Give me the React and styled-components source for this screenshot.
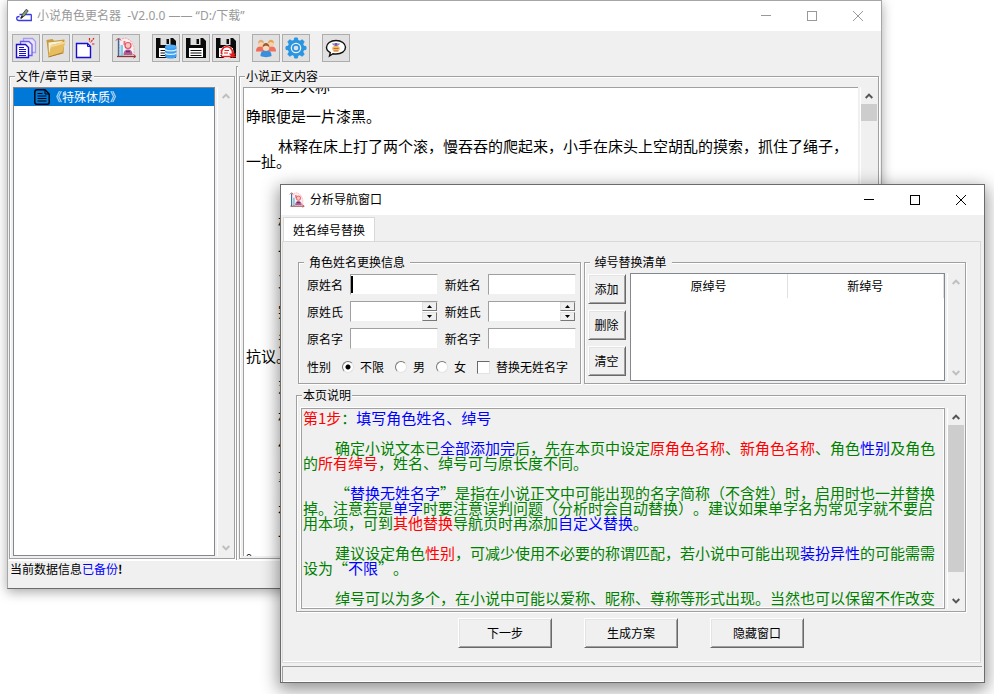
import React from "react";
import styled, { createGlobalStyle, css } from "styled-components";

const FACE = "#f0f0f0";
const SHADE = "#a0a0a0";

const GlobalStyle = createGlobalStyle`
  *, *::before, *::after { box-sizing: border-box; }
  body {
    margin: 0;
    background: #fff;
    color: #000;
    font: 12px/16px "Noto Sans CJK SC", sans-serif;
    text-spacing-trim: space-all;
  }
  button, input { font: inherit; color: inherit; margin: 0; padding: 0; border-radius: 0; }
  ul, p { margin: 0; padding: 0; }
`;

/* ---------- windows ---------- */

const Desktop = styled.main`
  position: relative;
  min-height: 100vh;
  overflow: hidden;
`;

const Window = styled.section`
  position: absolute;
  inset: ${(p) => p.$inset};
  display: flex;
  flex-direction: column;
  background: ${FACE};
  border: 1px solid ${(p) => (p.$active ? "#6b6b6b" : "#a6a6a6")};
  border-bottom-color: #6b6b6b;
  box-shadow: ${(p) =>
    p.$active
      ? "0 5px 16px 2px rgba(0, 0, 0, 0.42)"
      : "0 3px 11px rgba(0, 0, 0, 0.34)"};
`;

const TitleBar = styled.header`
  flex: none;
  display: flex;
  align-items: center;
  height: 30px;
  padding-left: 8px;
  background: #fff;
  color: ${(p) => (p.$active ? "#000" : "#999")};
`;

const TitleText = styled.h1`
  flex: 1;
  margin: 0 0 0 5px;
  font-family: "Noto Sans", "Noto Sans CJK SC", sans-serif;
  font-size: 12px;
  font-weight: 400;
  line-height: 16px;
  white-space: pre;
`;

const CaptionButton = styled.button`
  width: 46px;
  height: 30px;
  display: grid;
  place-items: center;
  border: 0;
  background: transparent;
`;

function Captions() {
  return (
    <>
      <CaptionButton type="button" aria-label="最小化">
        <svg width="10" height="10" stroke="currentColor" shapeRendering="crispEdges"><path d="M0 4.5H10" /></svg>
      </CaptionButton>
      <CaptionButton type="button" aria-label="最大化">
        <svg width="10" height="10" stroke="currentColor" fill="none" shapeRendering="crispEdges"><path d="M.5 .5h9v9h-9z" /></svg>
      </CaptionButton>
      <CaptionButton type="button" aria-label="关闭">
        <svg width="12" height="12" stroke="currentColor" fill="none"><path d="M1 1L11 11M11 1L1 11" /></svg>
      </CaptionButton>
    </>
  );
}

/* ---------- scroll bar ---------- */

const ScrollTrack = styled.div`
  flex: none;
  width: 17px;
  display: flex;
  flex-direction: column;
  border-left: 1px solid #fff;
  background: ${FACE};
`;

const ScrollButton = styled.button`
  flex: none;
  height: 17px;
  display: grid;
  place-items: center;
  border: 0;
  background: transparent;
  color: ${(p) => (p.disabled ? "#bfbfbf" : "#555")};
`;

const ThumbLane = styled.div`
  flex: 1;
  min-height: 0;
`;

const Thumb = styled.div`
  height: ${(p) => p.$size};
  background: #cdcdcd;
`;

function ScrollBar({ size }) {
  return (
    <ScrollTrack>
      <ScrollButton type="button" aria-label="向上" disabled={!size}>
        <svg width="8" height="8" fill="none" stroke="currentColor" strokeWidth="2"><path d="M.7 6L4 2.6L7.3 6" /></svg>
      </ScrollButton>
      <ThumbLane>{size && <Thumb $size={size} />}</ThumbLane>
      <ScrollButton type="button" aria-label="向下" disabled={!size}>
        <svg width="8" height="8" fill="none" stroke="currentColor" strokeWidth="2"><path d="M.7 2L4 5.4L7.3 2" /></svg>
      </ScrollButton>
    </ScrollTrack>
  );
}

/* ---------- groups ---------- */

const Group = styled.fieldset`
  min-width: 0;
  min-height: 0;
  margin: 0;
  padding: 0;
  border: 1px solid ${SHADE};
  box-shadow: 1px 1px 0 #fff, inset 1px 1px 0 #fff;
`;

const GroupTitle = styled.legend`
  margin-left: 5px;
  padding: 0 ${(p) => (p.$wide ? "5px" : "1px")};
  height: 16px;
  line-height: 15px;
  background: ${FACE};
`;

const PaneRow = styled.div`
  display: flex;
  gap: 2px;
  height: 100%;
  padding: ${(p) => p.$pad || "3px 0 2px 3px"};
`;

/* ---------- tool bar ---------- */

const ToolBar = styled.div`
  flex: none;
  display: flex;
  gap: 12px;
  padding: 3px 4px 4px;
`;

const ToolGroup = styled.div`
  display: flex;
  gap: 2px;
`;

const ToolButton = styled.button`
  width: 28px;
  height: 28px;
  display: grid;
  place-items: center;
  border: 1px solid #adadad;
  background: #e1e1e1;
`;

const PenLogo = () => (
  <svg width="16" height="16" viewBox="0 0 16 16" fill="none">
    <path d="M3.500 6.500H14.500Q15.300 6.500 15.300 7.300V12.500H3Q.7 12.500 .7 10.300 .7 8.500 3.500 8.500" fill="#fff" stroke="#3a3ae6" strokeWidth="1.300" />
    <path d="M5 10L6.200 6.500L10.200 1.300l2 1.500L8.200 8.200z" fill="#7fa578" stroke="#444" strokeWidth=".9" />
    <path d="M4.600 10.500l2.200-2.200" stroke="#222" strokeWidth="1.400" />
  </svg>
);

const PagesIcon = () => (
  <svg width="22" height="22" viewBox="0 0 22 22" fill="none">
    <path d="M8.500 1.500h9l3 3v11h-12z" fill="#e8e6f5" stroke="#a79bf5" strokeWidth="1.300" />
    <path d="M5.500 4.500h8.500l3 3v11h-11.500z" fill="#eeedf8" stroke="#6a5cf0" strokeWidth="1.300" />
    <path d="M1.500 7.500h9l3 3v10h-12z" fill="#fff" stroke="#1a0fd0" strokeWidth="1.400" />
    <path d="M4 10.500h5M4 12.500h7M4 14.500h7M4 16.500h7M4 18.500h7" stroke="#1a0fd0" strokeWidth="1" />
  </svg>
);

const FolderIcon = () => (
  <svg width="22" height="22" viewBox="0 0 22 22">
    <path d="M1.500 3l6-1 1.500 1.700L19.500 2.500l-1 14L3.500 20z" fill="#c99a3a" />
    <path d="M3.500 5.500L17.500 4l-1 7L4 16z" fill="#f5f0df" />
    <path d="M6 8l14.500-3.500L17 16 3.500 20z" fill="#e6bd62" />
    <path d="M6 8l14.500-3.500-.7 2L5.600 10.500z" fill="#f5d88f" />
    <path d="M3.500 20L17 16" stroke="#a97b28" />
  </svg>
);

const NewPageIcon = () => (
  <svg width="22" height="22" viewBox="0 0 22 22" fill="none">
    <path d="M1.500 6.500h11l3 3v11h-14z" fill="#fff" stroke="#1a0fd0" strokeWidth="1.400" />
    <path d="M12.500 6.500v3h3" stroke="#1a0fd0" />
    <path d="M14.500 1v3.500M19 1l-3.500 4.500M17 7h3" stroke="#e31c1c" strokeWidth="1.200" strokeDasharray="2 .6" />
  </svg>
);

const ChartIcon = ({ size = 22 }) => (
  <svg width={size} height={size} viewBox="0 0 22 22" fill="none">
    <path d="M4 2.500l7-1.500 5 3 3 6v8H5z" fill="#fdeef0" stroke="#f0a9b0" strokeDasharray="2 1" />
    <path d="M5.500 8v11h2.500V8z" fill="#7ed0ea" />
    <path d="M8.500 4v4h2V4z" fill="#f0708a" />
    <circle cx="13" cy="8.500" r="3" fill="#f6c9b4" stroke="#e0506c" strokeWidth="1.200" />
    <path d="M8.500 18c0-4 2-5.500 4.500-5.500s4.500 1.500 4.500 5.500z" fill="#b25c90" />
    <path d="M11 14.500h4" stroke="#5b2f86" strokeWidth="1.500" />
    <path d="M3.500 2v17.500" stroke="#2f6f9f" strokeWidth="1.400" />
    <path d="M1 3.500L3.500 1 6 3.500" stroke="#b83a3a" />
    <path d="M2 19.500h18" stroke="#8a3434" strokeWidth="1.300" />
    <path d="M18.500 17.500l2.500 2-2.500 1.500" stroke="#b83a3a" />
  </svg>
);

const Floppy = ({ children }) => (
  <svg width="22" height="22" viewBox="0 0 22 22">
    <path d="M1 1h17l3 3v17H1z" fill="#0a0a0a" />
    <path d="M5.500 1h10v7h-10z" fill="#dedede" />
    <path d="M11.500 2h2.500v5h-2.500z" fill="#0a0a0a" />
    <path d="M4 11h14v9H4z" fill="#fff" />
    <path d="M5.500 13.500h11M5.500 16h11M5.500 18.500h11" stroke="#0a0a0a" />
    {children}
  </svg>
);

const SaveDataIcon = () => (
  <Floppy>
    <path d="M10 9.500h11.500V19.500H10z" fill="#3d9df0" />
    <ellipse cx="15.750" cy="9.500" rx="5.750" ry="2" fill="#4facf7" />
    <ellipse cx="15.750" cy="19.500" rx="5.750" ry="2" fill="#3d9df0" />
    <path d="M10 12.500c2 1.800 9.500 1.800 11.500 0M10 16c2 1.800 9.500 1.800 11.500 0" fill="none" stroke="#d9f0ff" strokeWidth="1.200" />
  </Floppy>
);

const SaveAsIcon = () => (
  <Floppy>
    <circle cx="12" cy="15" r="6.500" fill="#fff" />
    <path d="M7 17.500A5.500 5.500 0 1 1 17.500 15.500v2" fill="none" stroke="#ee1c1c" strokeWidth="1.600" />
    <path d="M14 16.500h7l-3.500 4.500z" fill="#ee1c1c" />
    <path d="M6 19.500h15" stroke="#ee1c1c" strokeWidth="1.400" />
    <path d="M9.500 13.500h4.500M9 16h4" stroke="#ee1c1c" />
  </Floppy>
);

const PeopleIcon = () => (
  <svg width="22" height="22" viewBox="0 0 22 22">
    <path d="M1 14.500c0-4 2-5 4.500-5s4 1 4 5z" fill="#ef6a5c" />
    <path d="M12.500 14.500c0-4 1.500-5 4-5s4.500 1 4.500 5z" fill="#f2705f" />
    <circle cx="6" cy="6.500" r="3" fill="#f8cfa6" />
    <circle cx="16" cy="6.500" r="3" fill="#f8cfa6" />
    <path d="M3 6.500C3 1.500 9 1.500 9 6.500 7 4.500 5 4.500 3 6.500z" fill="#e0a878" />
    <path d="M13 6.500c0-5 6-5 6 0-2-2-4-2-6 0z" fill="#dfa552" />
    <path d="M5.500 19c0-5 2.500-5.500 5.500-5.500s5.500.5 5.500 5.500c-3 1.500-8 1.500-11 0z" fill="#3a8fdc" />
    <circle cx="11" cy="10.500" r="3.300" fill="#fad9b8" />
    <path d="M7.500 10.500c0-6 7-6 7 0-2-2.500-5-2.500-7 0z" fill="#9a5a2e" />
  </svg>
);

const TEETH = [0, 45, 90, 135, 180, 225, 270, 315];
const GearIcon = () => (
  <svg width="22" height="22" viewBox="0 0 22 22" fill="none">
    {TEETH.map((a) => (
      <path key={a} d="M9 4l.6-3h2.800l.6 3z" fill="#2b95e0" stroke="#2b95e0" transform={`rotate(${a} 11 11)`} />
    ))}
    <circle cx="11" cy="11" r="6.800" fill="#e6f2fb" stroke="#2b95e0" strokeWidth="3" />
    <circle cx="11" cy="11" r="3.200" fill="#e1e1e1" stroke="#2b95e0" strokeWidth="1.700" />
  </svg>
);

const BubbleIcon = () => (
  <svg width="22" height="22" viewBox="0 0 22 22">
    <path d="M11 3.500c5.500 0 9.500 3 9.500 6.800S16.500 17 11 17c-1 0-2-.1-3-.3L4.500 19l.8-3.300C3 14.500 1.500 12.500 1.500 10.300 1.500 6.500 5.500 3.500 11 3.500z" fill="#fff" stroke="#111" strokeWidth="1.400" />
    <path d="M7.500 6.500l2 1.800M14.500 6.500l-2 1.800" stroke="#8c7cc0" strokeWidth="1.200" />
    <path d="M9.500 6h3v3h-3z" fill="#6b5ab8" />
    <ellipse cx="11" cy="11.500" rx="3.800" ry="2.800" fill="#f3b95c" />
    <path d="M8.500 11.500h5" stroke="#b9703a" />
    <path d="M8.500 14h5" stroke="#d4602a" />
  </svg>
);

const DocIcon = () => (
  <svg width="16" height="16" viewBox="0 0 16 16" fill="none" stroke="#000">
    <path d="M3 .7h8L15.200 5v8.500c0 1.100-.6 1.800-1.800 1.800H3c-1.400 0-2.200-.8-2.200-2.100v-10.300c0-1.400.8-2.200 2.200-2.200z" strokeWidth="1.400" />
    <path d="M11 1v4h4" />
    <path d="M3.500 4.500h5M3.500 7h9M3.500 9.500h9M3.500 12h9" />
  </svg>
);

const TOOLS = [
  [["打开目录", PagesIcon], ["打开文件夹", FolderIcon], ["新建", NewPageIcon]],
  [["分析", ChartIcon]],
  [["备份", SaveDataIcon], ["保存", Floppy], ["还原", SaveAsIcon]],
  [["角色", PeopleIcon], ["设置", GearIcon]],
  [["关于", BubbleIcon]],
];

/* ---------- main window ---------- */

const Panes = styled.div`
  flex: 1;
  min-height: 0;
  display: flex;
  padding: 0 2px 0 1px;
  border-bottom: 1px solid #fff;
`;

const Pane = styled.div`
  display: grid;
  grid-template-rows: minmax(0, 1fr);
  min-width: 0;
  padding: 2px 0 1px;
  flex: ${(p) => p.$flex};
`;

const Sash = styled.div`
  flex: none;
  width: 2px;
  margin: 0 1px;
  border-left: 1px solid ${SHADE};
  border-top: 1px solid ${SHADE};
  background: #fff;
`;

const Tree = styled.ul`
  flex: 1;
  border: 1px solid #828790;
  background: #fff;
  list-style: none;
`;

const TreeItem = styled.li`
  display: flex;
  align-items: center;
  height: 18px;
  padding-left: 20px;
  color: #fff;
  background: #0078d7;
`;

const Novel = styled.div`
  flex: 1;
  overflow: hidden;
  padding: 0 0 0 2px;
  border: solid ${SHADE};
  border-width: 1px 0 0 1px;
  background: #fff;
  font-size: 15px;
  line-height: 15px;
`;

const NovelText = styled.div`
  margin-top: -10px;
`;

const Line = styled.p`
  min-height: 15px;
  white-space: ${(p) => (p.$keep ? "nowrap" : "normal")};
  text-indent: ${(p) => p.$indent || "0"};
`;

const NOVEL = [
  ["第三人称", "24px"], [""],
  ["睁眼便是一片漆黑。"], [""],
  ["林释在床上打了两个滚，慢吞吞的爬起来，小手在床头上空胡乱的摸索，抓住了绳子，一扯。", "32px", true],
  [""], ["“你说，这里黑", "32px"], [""],
  ["杯", "32px"], [""], ["一", "32px"], [""], ["又", "32px"], [""], ["突", "32px"], [""],
  ["没", "32px"], ["抗议。"], [""], ["对", "32px"], [""], ["林", "32px"], [""],
  ["但", "32px"], [""], ["拿", "32px"], [""], ["是", "32px"], [""], ["一", "32px"], ["。"],
];

const Status = styled.footer`
  flex: none;
  height: 27px;
  padding: 0 2px;
`;

const Blue = styled.span`color: #00f;`;
const Red = styled.span`color: #f00;`;

/* ---------- dialog ---------- */

const Tabs = styled.div`
  flex: none;
  display: flex;
  padding: 2px 2px 0;
`;

const Tab = styled.button`
  height: 25px;
  margin-bottom: -1px;
  padding: 0 9px;
  border: 1px solid #d9d9d9;
  border-bottom: 0;
  background: #fff;
`;

const Page = styled.div`
  flex: 1;
  min-height: 0;
  display: flex;
  flex-direction: column;
  margin: 0 3px 3px 1px;
  padding: 12px 14px 14px 13px;
  border: 1px solid #d9d9d9;
  box-shadow: inset 0 -1px 0 #fff;
`;

const GroupRow = styled.div`
  flex: none;
  display: grid;
  grid-template-columns: 283fr 383fr;
  gap: 3px;
  padding-left: 2px;
`;

const Form = styled.div`
  display: grid;
  grid-template-columns: 36px minmax(0, 1fr) 36px minmax(0, 1fr);
  gap: 6px 7px;
  align-items: center;
  padding: 4px 4px 0 8px;
`;

const sunken = css`
  border: 1px solid ${FACE};
  border-top-color: ${SHADE};
  border-left-color: ${SHADE};
  background-color: #fff;
`;

const TextBox = styled.input`
  width: 100%;
  height: 21px;
  padding: 0 3px;
  outline: 0;
  ${sunken}
  ${(p) =>
    p.$caret &&
    css`
      background-image: linear-gradient(#000, #000);
      background-size: 2px 17px;
      background-position: 0 1px;
      background-repeat: no-repeat;
    `}
`;

const SpinBox = styled.div`
  display: flex;
  height: 21px;
  ${sunken}
`;

const SpinInput = styled.input`
  flex: 1;
  width: 0;
  padding: 0 3px;
  border: 0;
  background: transparent;
`;

const SpinButtons = styled.div`
  width: 15px;
  display: grid;
  grid-template-rows: 1fr 1fr;
  gap: 1px;
`;

const SpinButton = styled.button`
  display: grid;
  place-items: center;
  min-height: 0;
  border: 1px solid #e3e3e3;
  border-right-color: #777;
  border-bottom-color: #777;
  background: ${FACE};
`;

const Choices = styled.div`
  display: flex;
  align-items: center;
  gap: 11px;
  height: 16px;
  margin: 10px 4px 8px 8px;
  white-space: nowrap;
`;

const Choice = styled.label`
  display: flex;
  align-items: center;
  gap: 6px;
`;

const Radio = styled.input.attrs({ type: "radio", name: "gender" })`
  appearance: none;
  width: 12px;
  height: 12px;
  border: 1px solid #777;
  border-right-color: #e3e3e3;
  border-bottom-color: #e3e3e3;
  border-radius: 50%;
  background: #fff;
  &:checked {
    background: radial-gradient(circle, #000 0 2px, #fff 3px);
  }
`;

const Check = styled.input.attrs({ type: "checkbox" })`
  appearance: none;
  width: 13px;
  height: 13px;
  border: 1px solid #696969;
  border-right-color: #e3e3e3;
  border-bottom-color: #e3e3e3;
  background: #fff;
`;

const Raised = styled.button`
  width: ${(p) => p.$w};
  height: 30px;
  border: 1px solid #fff;
  border-right-color: #696969;
  border-bottom-color: #696969;
  box-shadow: inset 1px 1px 0 #e3e3e3, inset -1px -1px 0 ${SHADE};
  background: ${FACE};
`;

const SideButtons = styled.div`
  flex: none;
  display: flex;
  flex-direction: column;
  gap: 6px;
  padding: 1px 2px 0 0;
`;

const TableFrame = styled.div`
  flex: 1;
  border: 1px solid #828790;
  background: #fff;
`;

const Table = styled.table`
  width: 100%;
  border-collapse: collapse;
  table-layout: fixed;
`;

const Th = styled.th`
  height: 24px;
  padding: 0;
  border-right: 1px solid #e0e0e0;
  font-weight: 400;
`;

const Explain = styled(Group)`
  flex: 1;
  margin-top: 3px;
`;

const ExplainText = styled.div`
  flex: 1;
  overflow: hidden;
  padding: 1px 0 0 1px;
  border: 1px solid ${SHADE};
  box-shadow: -1px -1px 0 #fff, inset -1px -1px 0 #fff;
  color: #008000;
  font-size: 15px;
  line-height: 15px;
`;

const Para = styled.p`
  margin-bottom: 15px;
  text-indent: ${(p) => (p.$flush ? "0" : "32px")};
`;

const Actions = styled.div`
  flex: none;
  display: flex;
  justify-content: center;
  gap: 32px;
  padding-top: 6px;
`;

const DialogStatus = styled.footer`
  flex: none;
  height: 16px;
  margin: 0 2px 0 1px;
  border: solid ${SHADE};
  border-width: 1px 0 0 1px;
  box-shadow: inset 0 -1px 0 #fff;
`;

function Entry({ id, label, caret }) {
  return (
    <>
      <label htmlFor={id}>{label}</label>
      <TextBox id={id} type="text" $caret={caret} />
    </>
  );
}

function Spin({ id, label }) {
  return (
    <>
      <label htmlFor={id}>{label}</label>
      <SpinBox>
        <SpinInput id={id} type="text" />
        <SpinButtons>
          <SpinButton type="button" aria-label={`${label} 上一个`}>
            <svg width="5" height="3"><path d="M0 3L2.500 0 5 3z" /></svg>
          </SpinButton>
          <SpinButton type="button" aria-label={`${label} 下一个`}>
            <svg width="5" height="3"><path d="M0 0h5L2.500 3z" /></svg>
          </SpinButton>
        </SpinButtons>
      </SpinBox>
    </>
  );
}

function MainWindow() {
  return (
    <Window $inset="0 112px 105px 7px">
      <TitleBar>
        <PenLogo />
        <TitleText>{"小说角色更名器  -V2.0.0 —— “D:/下载”"}</TitleText>
        <Captions />
      </TitleBar>
      <ToolBar>
        {TOOLS.map((group) => (
          <ToolGroup key={group[0][0]}>
            {group.map(([name, Icon]) => (
              <ToolButton key={name} type="button" aria-label={name}><Icon /></ToolButton>
            ))}
          </ToolGroup>
        ))}
      </ToolBar>
      <Panes>
        <Pane $flex="0 0 226px">
          <Group>
            <GroupTitle>文件/章节目录</GroupTitle>
            <PaneRow>
              <Tree>
                <TreeItem><DocIcon />《特殊体质》</TreeItem>
              </Tree>
              <ScrollBar />
            </PaneRow>
          </Group>
        </Pane>
        <Sash />
        <Pane $flex="1">
          <Group>
            <GroupTitle>小说正文内容</GroupTitle>
            <PaneRow $pad="3px 1px 2px 3px">
              <Novel>
                <NovelText>
                  {NOVEL.map(([text, indent, wrap], i) => (
                    <Line key={i} $indent={indent} $keep={!wrap}>{text}</Line>
                  ))}
                </NovelText>
              </Novel>
              <ScrollBar size="4%" />
            </PaneRow>
          </Group>
        </Pane>
      </Panes>
      <Status>当前数据信息<Blue>已备份</Blue><b>!</b></Status>
    </Window>
  );
}

function AnalysisDialog() {
  return (
    <Window $active $inset="184px 9px 11px 280px">
      <TitleBar $active>
        <ChartIcon size={16} />
        <TitleText>分析导航窗口</TitleText>
        <Captions />
      </TitleBar>
      <Tabs role="tablist">
        <Tab type="button" role="tab" aria-selected="true">姓名绰号替换</Tab>
      </Tabs>
      <Page>
        <GroupRow>
          <Group>
            <GroupTitle $wide>角色姓名更换信息</GroupTitle>
            <Form>
              <Entry id="old-full" label="原姓名" caret />
              <Entry id="new-full" label="新姓名" />
              <Spin id="old-family" label="原姓氏" />
              <Spin id="new-family" label="新姓氏" />
              <Entry id="old-given" label="原名字" />
              <Entry id="new-given" label="新名字" />
            </Form>
            <Choices>
              <span>性别</span>
              <Choice><Radio defaultChecked />不限</Choice>
              <Choice><Radio />男</Choice>
              <Choice><Radio />女</Choice>
              <Choice><Check />替换无姓名字</Choice>
            </Choices>
          </Group>
          <Group>
            <GroupTitle $wide>绰号替换清单</GroupTitle>
            <PaneRow $pad="3px 1px 2px 3px">
              <SideButtons>
                <Raised type="button" $w="38px">添加</Raised>
                <Raised type="button" $w="38px">删除</Raised>
                <Raised type="button" $w="38px">清空</Raised>
              </SideButtons>
              <TableFrame>
                <Table>
                  <thead>
                    <tr><Th scope="col">原绰号</Th><Th scope="col">新绰号</Th></tr>
                  </thead>
                </Table>
              </TableFrame>
              <ScrollBar />
            </PaneRow>
          </Group>
        </GroupRow>
        <Explain>
          <GroupTitle>本页说明</GroupTitle>
          <PaneRow $pad="5px 1px 2px 4px">
            <ExplainText>
              <Para $flush><Red>第1步</Red>：<Blue>填写角色姓名、绰号</Blue></Para>
              <Para>
                确定小说文本已<Blue>全部添加完</Blue>后，先在本页中设定<Red>原角色名称</Red>、<Red>新角色名称</Red>、角色<Blue>性别</Blue>及角色的<Red>所有绰号</Red>，姓名、绰号可与原长度不同。
              </Para>
              <Para>
                “<Blue>替换无姓名字</Blue>”是指在小说正文中可能出现的名字简称（不含姓）时，启用时也一并替换掉。注意若是<Blue>单字</Blue>时要注意误判问题（分析时会自动替换）。建议如果单字名为常见字就不要启用本项，可到<Red>其他替换</Red>导航页时再添加<Blue>自定义替换</Blue>。
              </Para>
              <Para>
                建议设定角色<Red>性别</Red>，可减少使用不必要的称谓匹配，若小说中可能出现<Blue>装扮异性</Blue>的可能需需设为“<Blue>不限</Blue>”。
              </Para>
              <Para>绰号可以为多个，在小说中可能以爱称、昵称、尊称等形式出现。当然也可以保留不作改变</Para>
            </ExplainText>
            <ScrollBar size="88%" />
          </PaneRow>
        </Explain>
        <Actions>
          <Raised type="button" $w="94px">下一步</Raised>
          <Raised type="button" $w="94px">生成方案</Raised>
          <Raised type="button" $w="94px">隐藏窗口</Raised>
        </Actions>
      </Page>
      <DialogStatus />
    </Window>
  );
}

export default function App() {
  return (
    <>
      <GlobalStyle />
      <Desktop>
        <MainWindow />
        <AnalysisDialog />
      </Desktop>
    </>
  );
}
